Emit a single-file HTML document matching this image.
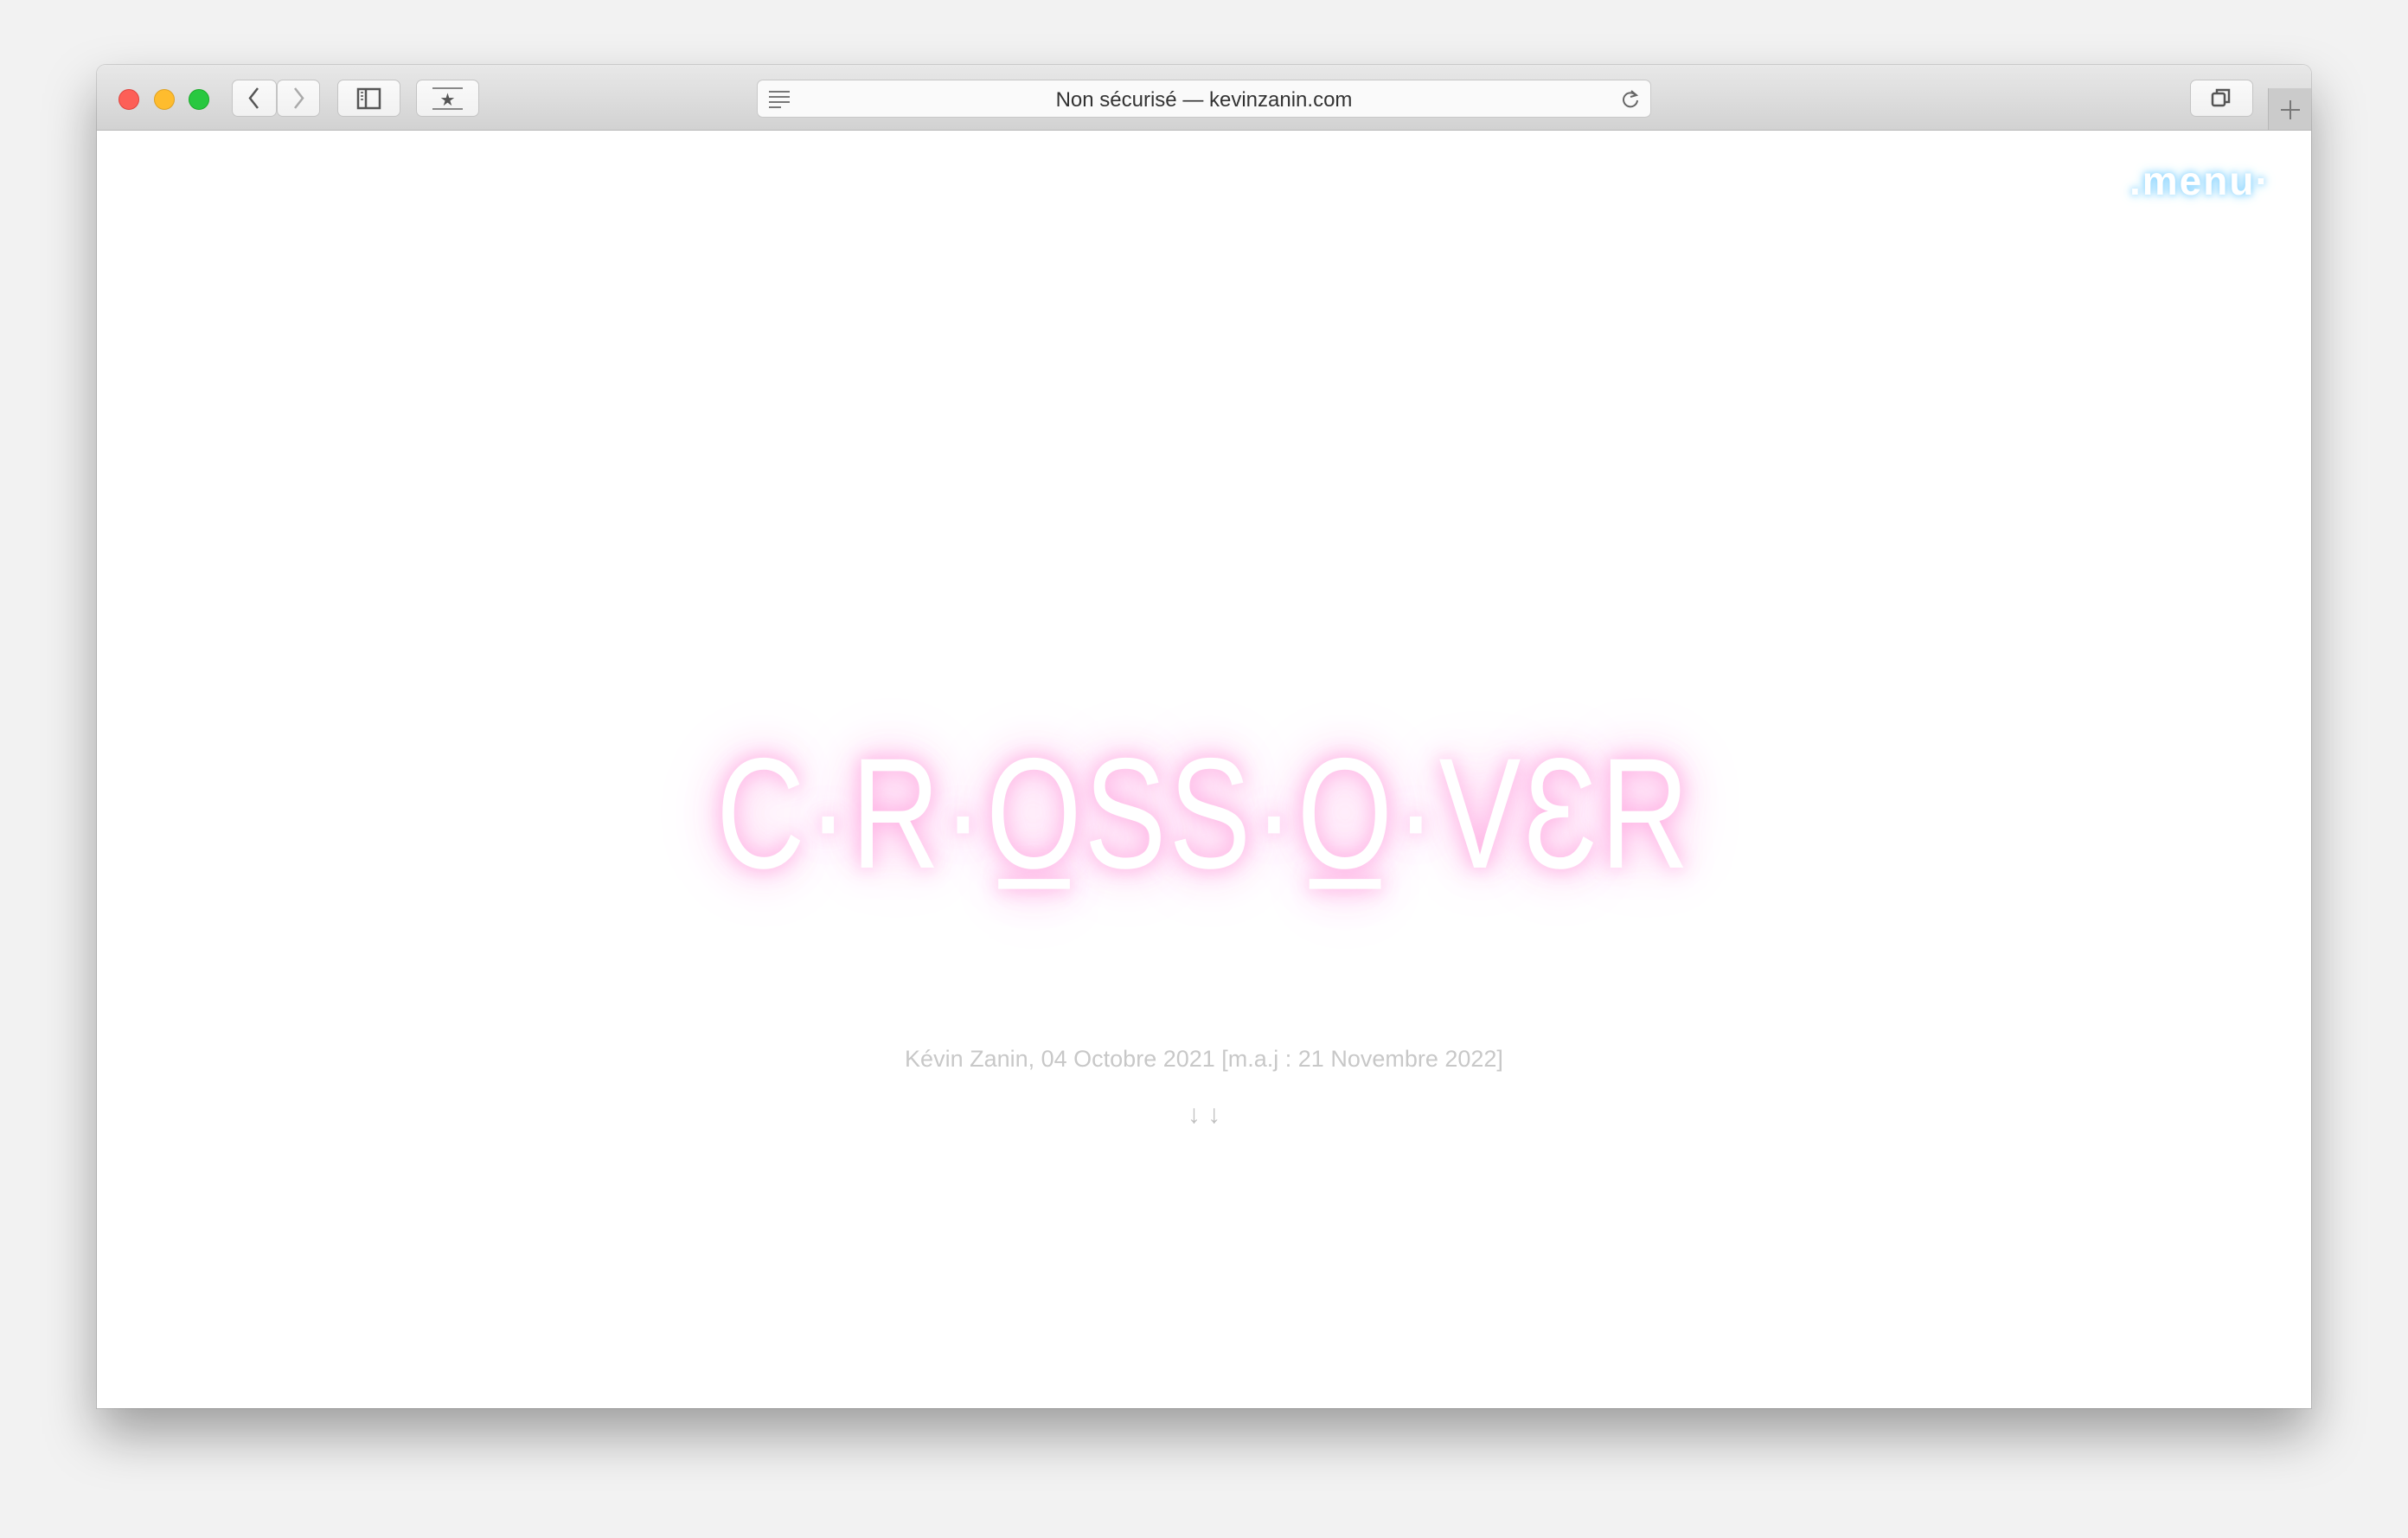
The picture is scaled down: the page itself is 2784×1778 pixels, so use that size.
<!DOCTYPE html>
<html><head><meta charset="utf-8"><style>
html,body{margin:0;padding:0;width:2784px;height:1778px;overflow:hidden;background:#f2f2f2;font-family:"Liberation Sans",sans-serif}
.win{position:absolute;left:112px;top:75px;width:2560px;height:1553px;background:#fff;border-radius:10px 10px 0 0;box-shadow:0 30px 60px rgba(0,0,0,.35),0 0 0 1px rgba(0,0,0,.12);overflow:hidden}
.tb{position:absolute;left:0;top:0;width:100%;height:75px;background:linear-gradient(#e8e8e8,#d2d2d2);border-bottom:1px solid #b8b8b8}
.dot{position:absolute;top:28px;width:24px;height:24px;border-radius:50%}
.btn{position:absolute;top:17px;height:43px;background:linear-gradient(#fafafa,#f1f1f1);border:1px solid #c4c4c4;border-radius:7px;box-sizing:border-box}
.addr{position:absolute;left:763px;top:17px;width:1034px;height:44px;background:#fafafa;border:1px solid #c8c8c8;border-radius:7px;box-sizing:border-box;text-align:center;line-height:46px;font-size:24px;color:#333}
.title{position:absolute;left:0;width:2560px;top:760px;text-align:center;font-size:182px;color:#fff;letter-spacing:4px;text-shadow:0 0 25px #ffa8e0,0 0 50px #ffb8e8,0 0 90px #ffc8ee;transform:scaleX(0.78);font-weight:300}
.sub{position:absolute;left:0;width:2560px;top:1134px;text-align:center;font-size:27px;color:#c8c8c8}
.arr{position:absolute;left:0;width:2560px;top:1197px;text-align:center;font-size:30px;color:#c0c0c0}
.menu{position:absolute;left:2350px;top:107px;font-size:46px;color:#fff;font-weight:bold;text-shadow:0 0 8px #7fd0ff,0 0 14px #9cdcff;letter-spacing:2px}
</style></head><body>
<div class="win">
 <div class="tb">
  <div class="dot" style="left:25px;background:#fd5f57;border:1px solid #e0443e;box-sizing:border-box"></div>
  <div class="dot" style="left:66px;background:#febc2e;border:1px solid #dea123;box-sizing:border-box"></div>
  <div class="dot" style="left:106px;background:#28c840;border:1px solid #1aab29;box-sizing:border-box"></div>
  <div class="btn" style="left:156px;width:52px"><svg width="50" height="41"><path d="M29 9 L20 20.5 L29 32" fill="none" stroke="#555" stroke-width="2.5"/></svg></div>
  <div class="btn" style="left:208px;width:50px"><svg width="48" height="41"><path d="M20 9 L29 20.5 L20 32" fill="none" stroke="#aaa" stroke-width="2.5"/></svg></div>
  <div class="btn" style="left:278px;width:73px"><svg width="71" height="41"><rect x="23" y="10" width="25" height="22" fill="none" stroke="#555" stroke-width="2.5"/><line x1="32" y1="10" x2="32" y2="32" stroke="#555" stroke-width="2.5"/><path d="M26 14h3M26 18h3M26 22h3" stroke="#777" stroke-width="2"/></svg></div>
  <div class="btn" style="left:369px;width:73px"><svg width="71" height="41"><path d="M18 9h35M18 33h35" stroke="#888" stroke-width="2"/><text x="35.5" y="29" font-size="20" text-anchor="middle" fill="#555" font-family="DejaVu Sans">★</text></svg></div>
  <div class="addr"><svg style="position:absolute;left:10px;top:10px" width="30" height="24"><path d="M3 3h24M3 9h24M3 15h24M3 21h14" stroke="#777" stroke-width="2"/></svg>Non sécurisé — kevinzanin.com<svg style="position:absolute;right:10px;top:9px" width="26" height="26"><path d="M19 8 A8 8 0 1 0 21 14" fill="none" stroke="#666" stroke-width="2"/><path d="M14 3 L20 8 L13 10" fill="none" stroke="#666" stroke-width="2"/></svg></div>
  <div class="btn" style="left:2420px;width:73px"><svg width="71" height="41"><rect x="25" y="15" width="14" height="14" rx="2" fill="none" stroke="#555" stroke-width="2.5"/><path d="M30 15v-4h14v14h-5" fill="none" stroke="#555" stroke-width="2.5"/></svg></div>
  <div style="position:absolute;left:2510px;top:27px;width:50px;height:48px;background:#cbcbcb;border-left:1px solid #b8b8b8"><svg width="50" height="48"><path d="M25 14v22M14 25h22" stroke="#777" stroke-width="2"/></svg></div>
 </div>
 <div class="menu">.menu·</div>
 <div class="title">C·R·O̲SS·O̲·VƐR</div>
 <div class="sub">Kévin Zanin, 04 Octobre 2021 [m.a.j : 21 Novembre 2022]</div>
 <div class="arr">↓ ↓</div>
</div>
</body></html>
